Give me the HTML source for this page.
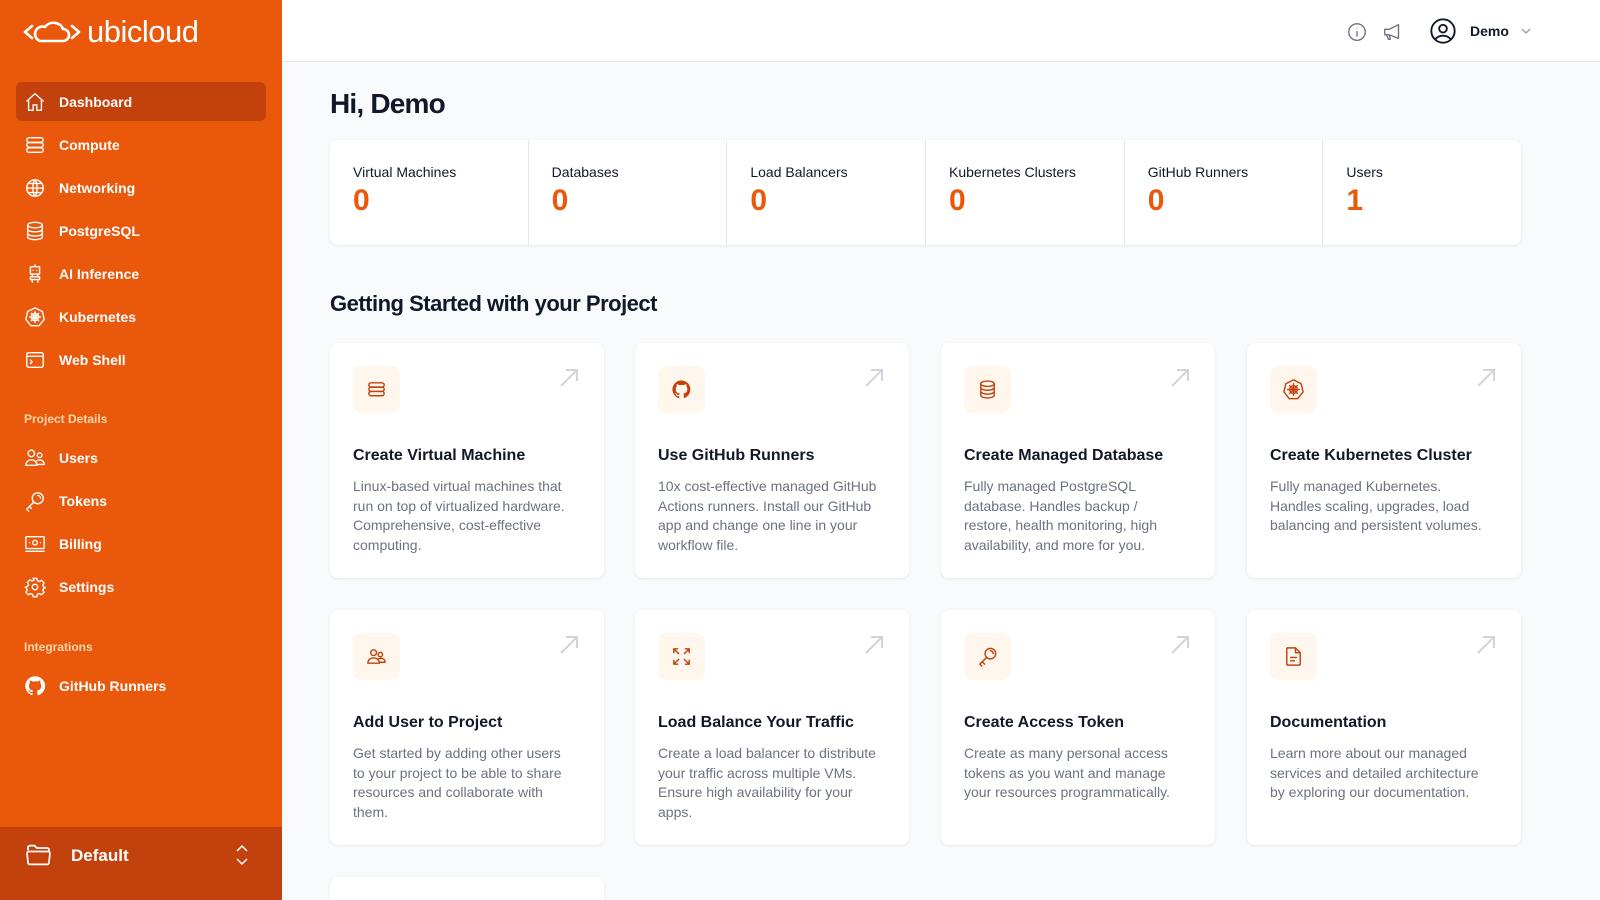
<!DOCTYPE html>
<html style="width:1600px;height:900px;overflow:hidden"><head><meta charset="utf-8"><style>
*{box-sizing:border-box;margin:0;padding:0}
body{width:1600px;height:900px;overflow:hidden;font-family:"Liberation Sans",Arial,sans-serif;background:#f9fafb;position:relative;color:#111827}
.sb{position:absolute;left:0;top:0;width:282px;height:900px;background:#ea580c;color:#fff}
.logo{position:absolute;left:23px;top:14px;display:flex;align-items:center;gap:6px;font-size:31px;color:#fff;letter-spacing:-0.5px}
.nav{position:absolute;left:16px;width:250px;height:39px;display:flex;align-items:center;font-size:14px;font-weight:bold;border-radius:6px}
.nav svg{position:absolute;left:8px;width:22px;height:22px;fill:none;stroke:#fff;stroke-width:1.5;stroke-linecap:round;stroke-linejoin:round}
.nav span{position:absolute;left:43px}
.nav.act{background:#c2410c}
.sec{position:absolute;left:24px;font-size:12px;font-weight:bold;color:#fed7aa}
.bot{position:absolute;left:0;top:827px;width:282px;height:73px;background:#c2410c}
.hdr{position:absolute;left:282px;top:0;right:0;height:62px;background:#fff;border-bottom:1px solid #e5e7eb}
h1{position:absolute;left:330px;top:88px;font-size:28px;font-weight:bold;letter-spacing:-0.8px}
h2{position:absolute;left:330px;top:291px;font-size:22px;font-weight:bold;letter-spacing:-0.5px}
.stats{position:absolute;left:330px;top:140px;width:1191px;height:105px;background:#fff;border-radius:8px;box-shadow:0 1px 3px rgba(0,0,0,.08);display:flex}
.st{flex:1;border-left:1px solid #e5e7eb;padding:24px 0 0 23px}
.st:first-child{border-left:none}
.st .l{font-size:14px;color:#111827}
.st .v{font-size:30px;font-weight:bold;color:#ea580c;margin-top:4px}
.card{position:absolute;width:274px;height:235px;background:#fff;border-radius:8px;box-shadow:0 1px 3px rgba(0,0,0,.08)}
.ib{position:absolute;left:23px;top:23px;width:47px;height:47px;background:#fff7ed;border-radius:8px}
.ib svg{position:absolute;left:12px;top:12px;width:23px;height:23px;fill:none;stroke:#c2410c;stroke-width:1.5;stroke-linecap:round;stroke-linejoin:round}
.ar{position:absolute;right:24px;top:24px;width:22px;height:22px;fill:none;stroke:#d1d5db;stroke-width:2}
.ct{position:absolute;left:23px;top:104px;font-size:16px;font-weight:bold;color:#111827}
.cd{position:absolute;left:23px;top:134px;width:222px;font-size:14px;line-height:19.5px;color:#6b7280}
</style></head><body>
<div class="sb">
 <div class="logo"><svg width="58" height="30" viewBox="0 0 58 30" fill="none" stroke="#fff" stroke-width="2.6" stroke-linecap="round" stroke-linejoin="round"><path d="M9 9 L2 15 L9 21"/><path d="M49 9 L56 15 L49 21"/><path d="M17 24 H40 a6 6 0 0 0 0-12 a10 9 0 0 0-18-2 a7 7 0 0 0-5 14z"/></svg><span>ubicloud</span></div>
 <div class="nav act" style="top:82px"><svg viewBox="0 0 24 24"><path d="M3 11 12 3l9 8M5 9.5V21h5v-6h4v6h5V9.5"/></svg><span>Dashboard</span></div>
 <div class="nav" style="top:125px"><svg viewBox="0 0 24 24"><rect x="3" y="4" width="18" height="5" rx="2.5"/><rect x="3" y="9.5" width="18" height="5" rx="2.5"/><rect x="3" y="15" width="18" height="5" rx="2.5"/></svg><span>Compute</span></div>
 <div class="nav" style="top:168px"><svg viewBox="0 0 24 24"><circle cx="12" cy="12" r="9"/><path d="M3 12h18M12 3c3 3 3 15 0 18M12 3c-3 3-3 15 0 18M5 7h14M5 17h14"/></svg><span>Networking</span></div>
 <div class="nav" style="top:211px"><svg viewBox="0 0 24 24"><ellipse cx="12" cy="5.5" rx="8" ry="3"/><path d="M4 5.5v13c0 1.7 3.6 3 8 3s8-1.3 8-3v-13M4 10c0 1.7 3.6 3 8 3s8-1.3 8-3M4 14.5c0 1.7 3.6 3 8 3s8-1.3 8-3"/></svg><span>PostgreSQL</span></div>
 <div class="nav" style="top:254px"><svg viewBox="0 0 24 24"><path d="M12 2v2M7 4h10v8H7zM10 8h.01M14 8h.01M9 12v3h6v-3M7 15h10v3H7zM9 18v3M15 18v3"/></svg><span>AI Inference</span></div>
 <div class="nav" style="top:297px"><svg viewBox="0 0 24 24"><path d="M12 2l8 4 2 8.5-5.5 7h-9L2 14.5 4 6z"/><circle cx="12" cy="12" r="4"/><path d="M12 6v12M6 12h12M8 8l8 8M16 8l-8 8"/></svg><span>Kubernetes</span></div>
 <div class="nav" style="top:340px"><svg viewBox="0 0 24 24"><rect x="3" y="4" width="18" height="16" rx="2"/><path d="M3 8h18M7 12l2 2-2 2"/></svg><span>Web Shell</span></div>
 <div class="sec" style="top:412px">Project Details</div>
 <div class="nav" style="top:438px"><svg viewBox="0 0 24 24"><circle cx="8" cy="7" r="3.5"/><circle cx="17" cy="9" r="2.5"/><path d="M2 20c0-4 3-6 6-6s6 2 6 6zM14 15c4-2 8 0 8 4h-7"/></svg><span>Users</span></div>
 <div class="nav" style="top:481px"><svg viewBox="0 0 24 24"><circle cx="15" cy="9" r="6"/><path d="M11 13l-8 8 2 2M6 18l2 2M15 6a3 3 0 0 1 3 3"/></svg><span>Tokens</span></div>
 <div class="nav" style="top:524px"><svg viewBox="0 0 24 24"><rect x="2" y="4" width="20" height="13" rx="1"/><circle cx="12" cy="10.5" r="2.5"/><path d="M2 20h20M6 10.5h.01M18 10.5h.01"/></svg><span>Billing</span></div>
 <div class="nav" style="top:567px"><svg viewBox="0 0 24 24"><circle cx="12" cy="12" r="3"/><path d="M10 2.5h4l.6 2.6 2.2 1 2.3-1.4 2.8 2.8-1.4 2.3 1 2.2 2.5.6v0 0l-2.5.6-1 2.2 1.4 2.3-2.8 2.8-2.3-1.4-2.2 1-.6 2.6h-4l-.6-2.6-2.2-1-2.3 1.4-2.8-2.8 1.4-2.3-1-2.2L1.5 12l2.5-.6 1-2.2-1.4-2.3 2.8-2.8 2.3 1.4 2.2-1z"/></svg><span>Settings</span></div>
 <div class="sec" style="top:640px">Integrations</div>
 <div class="nav" style="top:666px"><svg viewBox="0 0 24 24" style="fill:#fff;stroke:none"><path d="M12 1.5a10.5 10.5 0 0 0-3.3 20.5c.5.1.7-.2.7-.5v-1.900c-2.9.6-3.5-1.2-3.5-1.2-.5-1.200-1.2-1.500-1.2-1.500-1-.6.1-.6.1-.6 1 .1 1.6 1.1 1.6 1.1.9 1.6 2.5 1.1 3.100.9.1-.7.4-1.100.7-1.400-2.300-.3-4.800-1.200-4.800-5.200 0-1.100.4-2.100 1.100-2.800-.1-.3-.5-1.300.1-2.800 0 0 .9-.3 2.900 1.100a10 10 0 0 1 5.200 0c2-1.400 2.900-1.100 2.900-1.100.6 1.500.2 2.500.1 2.800.7.7 1.100 1.700 1.100 2.800 0 4-2.500 4.900-4.800 5.200.4.3.7 1 .7 1.900v2.800c0 .3.2.6.7.5A10.5 10.5 0 0 0 12 1.500z"/></svg><span>GitHub Runners</span></div>
 <div class="bot"><svg style="position:absolute;left:23px;top:14px" width="31" height="28" viewBox="0 0 24 24" fill="none" stroke="#fff" stroke-width="1.5" stroke-linejoin="round"><path d="M3 8V5.5a1.5 1.5 0 0 1 1.5-1.5h4l2 2h9a1.5 1.5 0 0 1 1.5 1.5V9M2.2 10.5A1.5 1.5 0 0 1 3.7 9h16.6a1.5 1.5 0 0 1 1.5 1.5l-.8 8A1.5 1.5 0 0 1 19.5 20h-15A1.5 1.5 0 0 1 3 18.5z"/></svg><span style="position:absolute;left:71px;top:19px;font-size:17px;font-weight:bold">Default</span><svg style="position:absolute;left:234px;top:16px" width="16" height="24" viewBox="0 0 16 24" fill="none" stroke="#fff" stroke-width="1.5"><path d="M3 8l5-5 5 5M3 16l5 5 5-5"/></svg></div>
</div>
<div class="hdr">
 <svg style="position:absolute;left:1064px;top:21px" width="22" height="22" viewBox="0 0 24 24" fill="none" stroke="#6b7280" stroke-width="1.5"><circle cx="12" cy="12" r="9"/><path d="M12 11v6M12 7.5v.5"/></svg>
 <svg style="position:absolute;left:1100px;top:21px" width="22" height="22" viewBox="0 0 24 24" fill="none" stroke="#6b7280" stroke-width="1.5" stroke-linejoin="round"><path d="M3 9h5l10-5v15L8 15H3zM5 15l2 5h2l-1-5"/></svg>
 <svg style="position:absolute;left:1147px;top:17px" width="28" height="28" viewBox="0 0 24 24" fill="none" stroke="#111827" stroke-width="1.6"><circle cx="12" cy="12" r="10"/><circle cx="12" cy="10" r="3.3"/><path d="M5.5 19c3-4 10-4 13 0"/></svg>
 <span style="position:absolute;left:1188px;top:23px;font-size:14px;font-weight:bold">Demo</span>
 <svg style="position:absolute;left:1238px;top:26px" width="12" height="10" viewBox="0 0 12 10" fill="none" stroke="#9ca3af" stroke-width="1.5"><path d="M2 3l4 4 4-4"/></svg>
</div>
<h1>Hi, Demo</h1>
<div class="stats">
 <div class="st"><div class="l">Virtual Machines</div><div class="v">0</div></div>
 <div class="st"><div class="l">Databases</div><div class="v">0</div></div>
 <div class="st"><div class="l">Load Balancers</div><div class="v">0</div></div>
 <div class="st"><div class="l">Kubernetes Clusters</div><div class="v">0</div></div>
 <div class="st"><div class="l">GitHub Runners</div><div class="v">0</div></div>
 <div class="st"><div class="l">Users</div><div class="v">1</div></div>
</div>
<h2>Getting Started with your Project</h2>

<div class="card" style="left:330px;top:343px"><div class="ib"><svg viewBox="0 0 24 24"><rect x="4" y="5" width="16" height="4.5" rx="2.2"/><rect x="4" y="9.5" width="16" height="4.5" rx="2.2"/><rect x="4" y="14" width="16" height="4.5" rx="2.2"/></svg></div><svg class="ar" viewBox="0 0 22 22"><path d="M3 19L19 3M8 3h11v11"/></svg><div class="ct">Create Virtual Machine</div><div class="cd">Linux-based virtual machines that run on top of virtualized hardware. Comprehensive, cost-effective computing.</div></div>
<div class="card" style="left:635px;top:343px"><div class="ib"><svg viewBox="0 0 24 24" style="fill:#c2410c;stroke:none"><path d="M12 2.5a9.5 9.5 0 0 0-3 18.5c.5.1.6-.2.6-.5v-1.7c-2.6.6-3.2-1.1-3.2-1.1-.4-1.1-1-1.4-1-1.4-.9-.6.1-.6.1-.6.9.1 1.4 1 1.4 1 .8 1.4 2.2 1 2.8.8.1-.6.3-1 .6-1.3-2.1-.2-4.3-1.1-4.3-4.7 0-1 .4-1.9 1-2.5-.1-.3-.4-1.2.1-2.5 0 0 .8-.3 2.6 1a9 9 0 0 1 4.7 0c1.8-1.3 2.6-1 2.6-1 .5 1.3.2 2.2.1 2.5.6.6 1 1.5 1 2.5 0 3.6-2.2 4.4-4.3 4.7.3.3.6.9.6 1.7v2.5c0 .3.2.6.6.5A9.5 9.5 0 0 0 12 2.5z"/></svg></div><svg class="ar" viewBox="0 0 22 22"><path d="M3 19L19 3M8 3h11v11"/></svg><div class="ct">Use GitHub Runners</div><div class="cd">10x cost-effective managed GitHub Actions runners. Install our GitHub app and change one line in your workflow file.</div></div>
<div class="card" style="left:941px;top:343px"><div class="ib"><svg viewBox="0 0 24 24"><ellipse cx="12" cy="6" rx="7" ry="2.8"/><path d="M5 6v12c0 1.5 3.1 2.8 7 2.8s7-1.3 7-2.8V6M5 10c0 1.5 3.1 2.8 7 2.8s7-1.3 7-2.8M5 14c0 1.5 3.1 2.8 7 2.8s7-1.3 7-2.8"/></svg></div><svg class="ar" viewBox="0 0 22 22"><path d="M3 19L19 3M8 3h11v11"/></svg><div class="ct">Create Managed Database</div><div class="cd">Fully managed PostgreSQL database. Handles backup / restore, health monitoring, high availability, and more for you.</div></div>
<div class="card" style="left:1247px;top:343px"><div class="ib"><svg viewBox="0 0 24 24"><path d="M12 2l8 4 2 8.5-5.5 7h-9L2 14.5 4 6z"/><circle cx="12" cy="12" r="4"/><path d="M12 6v12M6 12h12M8 8l8 8M16 8l-8 8"/></svg></div><svg class="ar" viewBox="0 0 22 22"><path d="M3 19L19 3M8 3h11v11"/></svg><div class="ct">Create Kubernetes Cluster</div><div class="cd">Fully managed Kubernetes. Handles scaling, upgrades, load balancing and persistent volumes.</div></div>

<div class="card" style="left:330px;top:610px"><div class="ib"><svg viewBox="0 0 24 24"><circle cx="9" cy="8" r="3"/><circle cx="16" cy="10" r="2.3"/><path d="M3 19c0-3.5 2.7-5.5 6-5.5s6 2 6 5.5zM14 14.5c3.5-1.5 7 0 7 3.5h-6"/></svg></div><svg class="ar" viewBox="0 0 22 22"><path d="M3 19L19 3M8 3h11v11"/></svg><div class="ct">Add User to Project</div><div class="cd">Get started by adding other users to your project to be able to share resources and collaborate with them.</div></div>
<div class="card" style="left:635px;top:610px"><div class="ib"><svg viewBox="0 0 24 24"><path d="M4 4l5 5M4 4v4M4 4h4M20 4l-5 5M20 4v4M20 4h-4M4 20l5-5M4 20v-4M4 20h4M20 20l-5-5M20 20v-4M20 20h-4"/></svg></div><svg class="ar" viewBox="0 0 22 22"><path d="M3 19L19 3M8 3h11v11"/></svg><div class="ct">Load Balance Your Traffic</div><div class="cd">Create a load balancer to distribute your traffic across multiple VMs. Ensure high availability for your apps.</div></div>
<div class="card" style="left:941px;top:610px"><div class="ib"><svg viewBox="0 0 24 24"><circle cx="15" cy="9" r="5.5"/><path d="M11 13l-7 7 2 2M7 18l2 2M15 6a3 3 0 0 1 3 3"/></svg></div><svg class="ar" viewBox="0 0 22 22"><path d="M3 19L19 3M8 3h11v11"/></svg><div class="ct">Create Access Token</div><div class="cd">Create as many personal access tokens as you want and manage your resources programmatically.</div></div>
<div class="card" style="left:1247px;top:610px"><div class="ib"><svg viewBox="0 0 24 24"><path d="M6 3h8l5 5v12a1 1 0 0 1-1 1H6a1 1 0 0 1-1-1V4a1 1 0 0 1 1-1zM14 3v5h5M9 13h6M9 16.5h4"/></svg></div><svg class="ar" viewBox="0 0 22 22"><path d="M3 19L19 3M8 3h11v11"/></svg><div class="ct">Documentation</div><div class="cd">Learn more about our managed services and detailed architecture by exploring our documentation.</div></div>

<div class="card" style="left:330px;top:877px;height:23px;border-radius:8px 8px 0 0"></div>
</body></html>
